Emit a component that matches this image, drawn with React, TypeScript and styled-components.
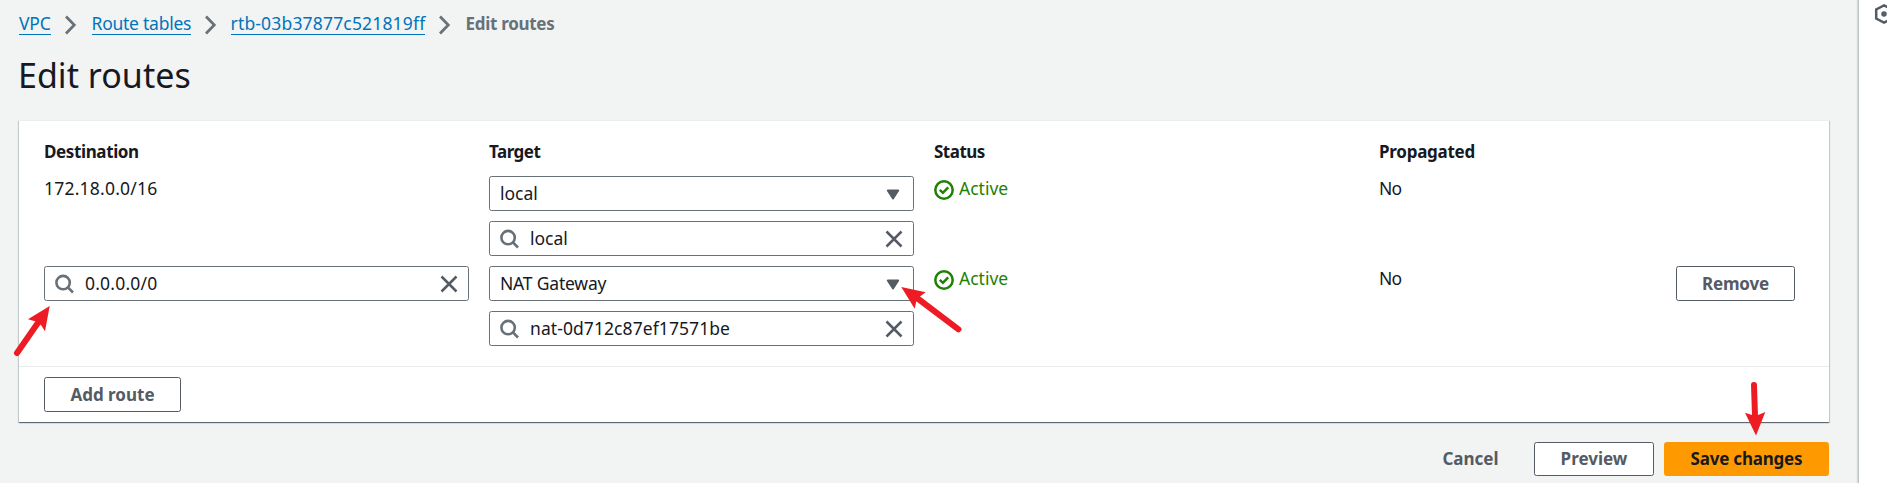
import React from 'react';
import styled, { createGlobalStyle } from 'styled-components';

const GlobalStyle = createGlobalStyle`
  *, *::before, *::after { box-sizing: border-box; }
  body {
    margin: 0;
    background: #f2f3f3;
    color: #16191f;
    font-family: "Noto Sans", "Open Sans", sans-serif;
    font-size: 17.5px;
    line-height: 27px;
    overflow: hidden;
  }
`;

const Page = styled.div`
  position: relative;
  display: flex;
  width: 1887px;
  height: 483px;
  overflow: hidden;
`;

const Content = styled.main`
  flex: 1;
  padding: 10px 29px 0 19px;
`;

const ToolsRail = styled.aside`
  width: 29px;
  padding: 3px 0 0 15px;
  overflow: hidden;
  background: #fff;
  border-left: 1px solid #bfc4c5;
  box-shadow: -1px 0 1px rgba(0, 28, 36, 0.12);
`;

const Text = styled.span<{ $track?: number }>`
  letter-spacing: ${(p) => p.$track ?? 0}px;
  white-space: pre;
`;

const Breadcrumbs = styled.nav`
  display: flex;
  align-items: flex-start;
  height: 30px;
`;

const Crumb = styled.div<{ $width: number }>`
  display: flex;
  width: ${(p) => p.$width}px;
`;

const CrumbLink = styled.a<{ $track: number }>`
  height: 25px;
  color: #0073bb;
  border-bottom: 1px solid #0073bb;
  letter-spacing: ${(p) => p.$track}px;
  white-space: pre;
`;

const CrumbSeparator = styled.svg`
  flex: none;
  margin: 4px 0 0 13px;
`;

const CurrentCrumb = styled.span`
  color: #687078;
  font-size: 17px;
  font-weight: 700;
  letter-spacing: -0.29px;
`;

const Title = styled.h1`
  margin: 12px 0 0 -1px;
  height: 68px;
  font-size: 34px;
  font-weight: 400;
  line-height: 46px;
  letter-spacing: 0.03px;
`;

const Panel = styled.section`
  height: 302px;
  background: #fff;
  border-top: 1px solid #eaeded;
  box-shadow: 0 1px 1px 0 rgba(0, 28, 36, 0.3), 1px 1px 1px 0 rgba(0, 28, 36, 0.15),
    -1px 1px 1px 0 rgba(0, 28, 36, 0.15), 0 1px 0 0 rgba(0, 28, 36, 0.25);
`;

const Routes = styled.div`
  height: 245px;
  padding: 17px 34px 0 25px;
`;

const RouteRow = styled.div`
  display: grid;
  grid-template-columns: 425px 425px 425px 277px 119px;
  column-gap: 20px;
  height: 90px;
`;

const HeaderRow = styled(RouteRow)`
  height: 38px;
  font-size: 17px;
  font-weight: 700;
`;

const PlainCell = styled.div`
  display: flex;
  margin-top: -1px;
`;

const ControlStack = styled.div`
  display: flex;
  flex-direction: column;
  gap: 10px;
`;

const Field = styled.div`
  display: flex;
  align-items: center;
  width: 425px;
  height: 35px;
  padding: 0 9px 0 10px;
  background: #fff;
  border: 1px solid #687078;
  border-radius: 2.5px;
  line-height: 33px;
`;

const FieldValue = styled.span<{ $track: number; $inset?: number }>`
  flex: 1;
  padding-left: ${(p) => p.$inset ?? 0}px;
  letter-spacing: ${(p) => p.$track}px;
  white-space: pre;
`;

const StatusLabel = styled.span`
  display: flex;
  color: #1d8102;

  svg {
    margin: 5px 5px 0 0;
  }
`;

const Button = styled.button<{ $width: number; $height?: number; $track: number; $primary?: boolean }>`
  width: ${(p) => p.$width}px;
  height: ${(p) => p.$height ?? 35}px;
  padding: 0 0 1px;
  color: ${(p) => (p.$primary ? '#16191f' : '#545b64')};
  background: ${(p) => (p.$primary ? '#ff9900' : '#fff')};
  border: 1px solid ${(p) => (p.$primary ? '#ff9900' : '#545b64')};
  border-radius: 2.5px;
  font: 700 17px/31px "Noto Sans", "Open Sans", sans-serif;
  letter-spacing: ${(p) => p.$track}px;
`;

const LinkButton = styled(Button)`
  background: transparent;
  border-color: transparent;
`;

const PanelFooter = styled.div`
  height: 56px;
  padding: 10px 25px;
  border-top: 1px solid #eaeded;
`;

const Actions = styled.div`
  display: flex;
  justify-content: flex-end;
  gap: 10px;
  padding-top: 20px;
`;

const Annotations = styled.svg`
  position: absolute;
  inset: 0;
  pointer-events: none;
`;

const Chevron = () => (
  <CrumbSeparator width="14" height="22" viewBox="0 0 14 22" fill="none" stroke="#687078" strokeWidth="2.7">
    <path d="M2 2.5 L10.3 11 L2 19.5" />
  </CrumbSeparator>
);

const SearchIcon = () => (
  <svg width="20" height="20" viewBox="0 0 20 20" fill="none" stroke="#687078" strokeWidth="2.6">
    <circle cx="8.1" cy="8.6" r="6.7" />
    <path d="M12.9 13.4 L18 18.5" />
  </svg>
);

const ClearIcon = () => (
  <svg width="20" height="20" viewBox="0 0 20 20" fill="none" stroke="#545b64" strokeWidth="2.5">
    <path d="M2.5 2.5 L17.5 17.5 M17.5 2.5 L2.5 17.5" />
  </svg>
);

const CaretIcon = () => (
  <svg width="20" height="20" viewBox="0 0 20 20" fill="#545b64" stroke="#545b64" strokeWidth="2" strokeLinejoin="round">
    <path d="M3.8 6.5 H14.2 L9 14.4 Z" />
  </svg>
);

const StatusIcon = () => (
  <svg width="20" height="20" viewBox="0 0 20 20" fill="none" stroke="#1d8102" strokeWidth="2.5">
    <circle cx="10" cy="10" r="8.7" />
    <path d="M5.8 9.9 L8.9 12.8 L14.2 7.3" />
  </svg>
);

const SettingsIcon = () => (
  <svg width="20" height="22" viewBox="0 0 20 22" fill="none" stroke="#545b64" strokeWidth="2.5">
    <path d="M10 2.3 L17.8 6.5 V15.5 L10 19.7 L2.2 15.5 V6.5 Z" />
    <circle cx="10" cy="11" r="1.5" />
  </svg>
);

const SelectField = ({ value, track }: { value: string; track: number }) => (
  <Field>
    <FieldValue $track={track}>{value}</FieldValue>
    <CaretIcon />
  </Field>
);

const SearchField = ({ value, track }: { value: string; track: number }) => (
  <Field>
    <SearchIcon />
    <FieldValue $track={track} $inset={10}>{value}</FieldValue>
    <ClearIcon />
  </Field>
);

const ActiveStatus = () => (
  <PlainCell>
    <StatusLabel>
      <StatusIcon />
      <Text>Active</Text>
    </StatusLabel>
  </PlainCell>
);

export default function App() {
  return (
    <>
      <GlobalStyle />
      <Page>
        <Content>
          <Breadcrumbs>
            <Crumb $width={72.5}>
              <CrumbLink $track={-0.15}>VPC</CrumbLink>
              <Chevron />
            </Crumb>
            <Crumb $width={139}>
              <CrumbLink $track={-0.25}>Route tables</CrumbLink>
              <Chevron />
            </Crumb>
            <Crumb $width={235}>
              <CrumbLink $track={0.17}>rtb-03b37877c521819ff</CrumbLink>
              <Chevron />
            </Crumb>
            <CurrentCrumb>Edit routes</CurrentCrumb>
          </Breadcrumbs>
          <Title>Edit routes</Title>

          <Panel>
            <Routes>
              <HeaderRow>
                <Text $track={-0.38}>Destination</Text>
                <Text $track={-0.5}>Target</Text>
                <Text $track={-0.5}>Status</Text>
                <Text $track={-0.26}>Propagated</Text>
              </HeaderRow>
              <RouteRow>
                <PlainCell><Text $track={0.22}>172.18.0.0/16</Text></PlainCell>
                <ControlStack>
                  <SelectField value="local" track={0} />
                  <SearchField value="local" track={0} />
                </ControlStack>
                <ActiveStatus />
                <PlainCell><Text $track={-0.8}>No</Text></PlainCell>
              </RouteRow>
              <RouteRow>
                <SearchField value="0.0.0.0/0" track={0.2} />
                <ControlStack>
                  <SelectField value="NAT Gateway" track={-0.2} />
                  <SearchField value="nat-0d712c87ef17571be" track={0.08} />
                </ControlStack>
                <ActiveStatus />
                <PlainCell><Text $track={-0.8}>No</Text></PlainCell>
                <Button $width={119} $track={-0.2}>Remove</Button>
              </RouteRow>
            </Routes>
            <PanelFooter>
              <Button $width={137} $track={0}>Add route</Button>
            </PanelFooter>
          </Panel>

          <Actions>
            <LinkButton $width={107} $height={34} $track={0}>Cancel</LinkButton>
            <Button $width={120} $height={34} $track={0}>Preview</Button>
            <Button $width={165} $height={34} $track={-0.21} $primary>Save changes</Button>
          </Actions>
        </Content>
        <ToolsRail>
          <SettingsIcon />
        </ToolsRail>

        <Annotations width="1887" height="483" fill="#ed1c24" stroke="#ed1c24">
          <path stroke="none" d="M49.7 306 L28 319.3 L35.8 321.5 L41 325 L45 331.3 Z" />
          <path strokeWidth="6" strokeLinecap="round" d="M17 353 L38.5 322" />
          <path stroke="none" d="M901.3 287 L925.7 292.3 L920.3 296.3 L916.3 301.3 L914.7 308.7 Z" />
          <path strokeWidth="6" strokeLinecap="round" d="M958.5 329.3 L917 298" />
          <path stroke="none" d="M1756 435.5 L1745 412.7 L1752 415 L1758 415 L1765.3 412 Z" />
          <path strokeWidth="6" strokeLinecap="round" d="M1754 385 L1755 416" />
        </Annotations>
      </Page>
    </>
  );
}
